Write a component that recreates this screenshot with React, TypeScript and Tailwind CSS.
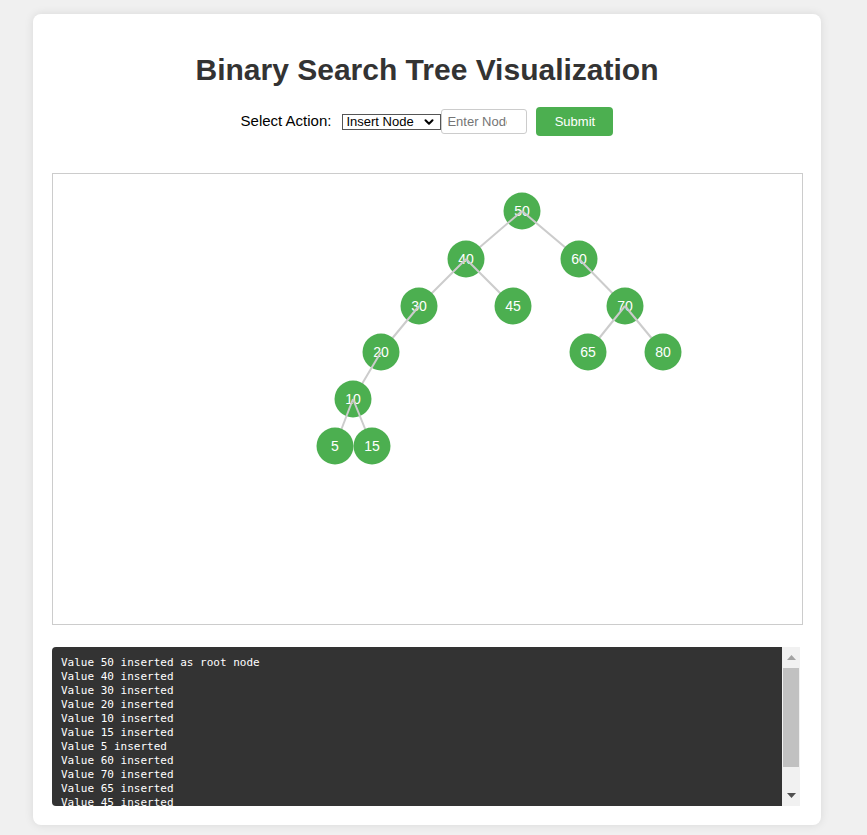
import React from "react";
import { ChevronDown } from "lucide-react";

type TreeNode = { v: number; x: number; y: number; children: number[] };

// positions measured inside the tree panel
const nodes: Record<number, TreeNode> = {
  50: { v: 50, x: 469, y: 37, children: [40, 60] },
  40: { v: 40, x: 413, y: 85, children: [30, 45] },
  60: { v: 60, x: 526, y: 85, children: [70] },
  30: { v: 30, x: 366, y: 132, children: [20] },
  45: { v: 45, x: 460, y: 132, children: [] },
  70: { v: 70, x: 572, y: 132, children: [65, 80] },
  20: { v: 20, x: 328, y: 178, children: [10] },
  65: { v: 65, x: 535, y: 178, children: [] },
  80: { v: 80, x: 610, y: 178, children: [] },
  10: { v: 10, x: 300, y: 225, children: [5, 15] },
  5: { v: 5, x: 282, y: 272, children: [] },
  15: { v: 15, x: 319, y: 272, children: [] },
};

const logLines = [
  "Value 50 inserted as root node",
  "Value 40 inserted",
  "Value 30 inserted",
  "Value 20 inserted",
  "Value 10 inserted",
  "Value 15 inserted",
  "Value 5 inserted",
  "Value 60 inserted",
  "Value 70 inserted",
  "Value 65 inserted",
  "Value 45 inserted",
  "Value 80 inserted",
];

const R = 18.5;

function drawNode(key: number): React.ReactNode[] {
  const n = nodes[key];
  const out: React.ReactNode[] = [
    <g key={"n" + key}>
      <circle cx={n.x} cy={n.y} r={R} fill="#4CAF50" />
      <text
        x={n.x}
        y={n.y + 5}
        textAnchor="middle"
        fill="#fff"
        fontSize="14"
        fontFamily="Liberation Sans, Arial, sans-serif"
      >
        {n.v}
      </text>
    </g>,
  ];
  n.children.forEach((c) => {
    const ch = nodes[c];
    out.push(
      <line key={`l${key}-${c}`} x1={n.x} y1={n.y} x2={ch.x} y2={ch.y} stroke="#ccc" strokeWidth="2" />
    );
  });
  n.children.forEach((c) => out.push(...drawNode(c)));
  return out;
}

const TreeCanvas = () => (
  <svg width="749" height="449" className="block">
    {drawNode(50)}
  </svg>
);

// classic scrollbar look for the log box
const Scrollbar = () => (
  <div className="flex w-[18px] flex-col items-center bg-[#f1f1f1]">
    <div className="flex h-[21px] items-center justify-center">
      <svg width="9" height="5"><path d="M0 5 L4.5 0 L9 5 Z" fill="#a3a3a3" /></svg>
    </div>
    <div className="h-[99px] w-[16px] bg-[#c1c1c1]" />
    <div className="flex-1" />
    <div className="flex h-[21px] items-center justify-center">
      <svg width="9" height="5"><path d="M0 0 L9 0 L4.5 5 Z" fill="#505050" /></svg>
    </div>
  </div>
);

export default function App() {
  return (
    <div className="min-h-[835px] bg-[#f0f0f0] pt-[14px] pb-[10px] font-['Liberation_Sans',Arial,sans-serif]">
      <div className="ml-[33px] w-[788px] rounded-lg bg-white p-[19px] shadow-[0_0_10px_rgba(0,0,0,0.1)]">
        <h1 className="mt-[20px] text-center text-[30px] font-bold leading-[34px] text-[#333]">
          Binary Search Tree Visualization
        </h1>
        <div className="mt-[20px] flex items-center justify-center">
          <label className="mr-[11px] text-[15px] text-black">Select Action:</label>
          <div className="relative">
            <select className="block h-[16px] w-[99px] appearance-none border border-[#555] bg-white pl-[3px] text-[13px] leading-[14px] text-black">
              <option>Insert Node</option>
              <option>Delete Node</option>
              <option>Search Node</option>
            </select>
            <ChevronDown
              size={14}
              strokeWidth={3.5}
              className="pointer-events-none absolute top-[1px] right-[5px] text-black"
            />
          </div>
          <input
            placeholder="Enter Node"
            className="h-[25px] w-[86px] rounded-[3px] border border-[#ccc] pr-[19px] pl-[5px] text-[13px] placeholder:text-[#757575]"
          />
          <button className="ml-[9px] h-[29px] w-[77px] rounded-[4px] bg-[#4CAF50] text-[13px] font-normal text-white">
            Submit
          </button>
        </div>
        <div className="mt-[37px] h-[452px] w-[751px] border border-[#ccc]">
          <TreeCanvas />
        </div>
        <div className="mt-[22px] flex h-[159px] w-[748px]">
          <div className="flex-1 overflow-hidden rounded-l-[4px] bg-[#333] px-[9px] pt-[9px] font-['DejaVu_Sans_Mono',monospace] text-[11px] leading-[14px] text-white">
            {logLines.map((l, i) => (
              <div key={i} className="whitespace-pre">
                {l}
              </div>
            ))}
          </div>
          <Scrollbar />
        </div>
      </div>
    </div>
  );
}
